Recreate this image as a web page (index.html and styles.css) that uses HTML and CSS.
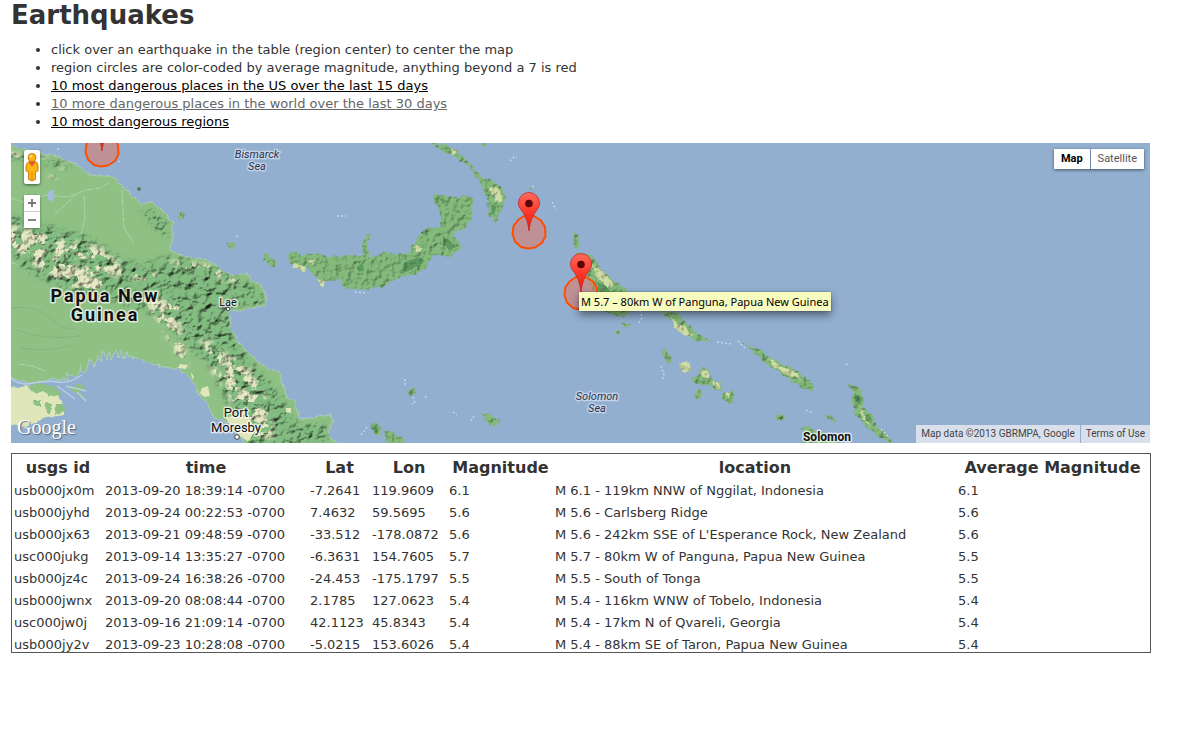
FILE: index.html
```html
<!DOCTYPE html>
<html lang="en">
<head>
<meta charset="utf-8">
<title>Earthquakes</title>
<link rel="stylesheet" href="styles.css">
</head>
<body>
<h1 class="title">Earthquakes</h1>
<ul class="notes">
  <li>click over an earthquake in the table (region center) to center the map</li>
  <li>region circles are color-coded by average magnitude, anything beyond a 7 is red</li>
  <li><a href="#us">10 most dangerous places in the US over the last 15 days</a></li>
  <li><a class="current" href="#world">10 more dangerous places in the world over the last 30 days</a></li>
  <li><a href="#regions">10 most dangerous regions</a></li>
</ul>

<section class="map" aria-label="Map">
  <svg class="terrain" viewBox="11 143 1139 300" preserveAspectRatio="xMinYMin slice">
    <defs>
      <filter id="relief" x="0" y="0" width="1" height="1" color-interpolation-filters="sRGB">
        <feTurbulence type="fractalNoise" baseFrequency="0.12 0.14" numOctaves="4" seed="7" result="n"/>
        <feColorMatrix in="n" type="matrix" values="0 0 0 0 0  0 0 0 0 0  0 0 0 0 0  1 0 0 0 0" result="h"/>
        <feDiffuseLighting in="h" surfaceScale="3" diffuseConstant="1.35" lighting-color="#fff" result="l"><feDistantLight azimuth="225" elevation="50"/></feDiffuseLighting>
        <feGaussianBlur in="SourceGraphic" stdDeviation="3" result="soft"/>
        <feComposite in="l" in2="soft" operator="arithmetic" k1="1" result="lit"/>
        <feComposite in="lit" in2="soft" operator="in"/>
      </filter>
      <filter id="small" x="0" y="0" width="1" height="1" color-interpolation-filters="sRGB">
        <feTurbulence type="fractalNoise" baseFrequency="0.16" numOctaves="3" seed="3" result="n"/>
        <feColorMatrix in="n" type="matrix" values="0 0 0 0 0  0 0 0 0 0  0 0 0 0 0  1 0 0 0 0" result="h"/>
        <feDiffuseLighting in="h" surfaceScale="1.300" diffuseConstant="1.250" lighting-color="#fff" result="l"><feDistantLight azimuth="225" elevation="52"/></feDiffuseLighting>
        <feDisplacementMap in="SourceGraphic" in2="n" scale="5" xChannelSelector="R" yChannelSelector="G" result="d"/>
        <feComposite in="l" in2="d" operator="arithmetic" k1="1" result="lit"/>
        <feComposite in="lit" in2="d" operator="in"/>
      </filter>
      <filter id="patches" x="0" y="0" width="1" height="1" color-interpolation-filters="sRGB">
        <feTurbulence type="fractalNoise" baseFrequency="0.09" numOctaves="4" seed="21" result="n"/>
        <feColorMatrix in="n" type="matrix" values="0 0 0 0 0  0 0 0 0 0  0 0 0 0 0  0 12 0 0 -5.500" result="m"/>
        <feGaussianBlur in="SourceGraphic" stdDeviation="3" result="soft"/>
        <feComposite in="soft" in2="m" operator="in" result="pale"/>
        <feTurbulence type="fractalNoise" baseFrequency="0.15" numOctaves="4" seed="7" result="n2"/>
        <feColorMatrix in="n2" type="matrix" values="0 0 0 0 0  0 0 0 0 0  0 0 0 0 0  1 0 0 0 0" result="h"/>
        <feDiffuseLighting in="h" surfaceScale="2.500" diffuseConstant="1.250" lighting-color="#fff" result="l"><feDistantLight azimuth="225" elevation="52"/></feDiffuseLighting>
        <feComposite in="l" in2="pale" operator="arithmetic" k1="1" result="lit"/>
        <feComposite in="lit" in2="pale" operator="in"/>
      </filter>
      <filter id="coast" x="-.1" y="-.1" width="1.2" height="1.2">
        <feTurbulence type="fractalNoise" baseFrequency="0.12" numOctaves="3" seed="5"/>
        <feDisplacementMap in="SourceGraphic" scale="6" xChannelSelector="R" yChannelSelector="G"/>
      </filter>
      <clipPath id="main"><path d="M11 145L20 147 40 154 60 157 75 164 90 175 103 176 115 177 117 183 130 192 140 203 153 203 167 215 173 223 173 240 171 252 177 255 200 259 213 263 230 275 247 274 260 285 266 295 266 307 253 307 240 311 228 310 230 327 238 343 253 357 267 368 279 372 283 387 287 397 295 402 298 418 310 418 330 415 333 420 328 433 340 443 250 443 240 436 232 425 213 417 208 405 197 390 192 378 180 370 157 365 137 358 120 352 110 357 97 358 87 363 86 370 77 377 53 380 33 383 18 380 11 376Z"/></clipPath>
      <linearGradient id="pinred" x1="0" y1="0" x2="0" y2="1"><stop offset="0" stop-color="#ff6b5e"/><stop offset=".5" stop-color="#fd3a2b"/><stop offset="1" stop-color="#e3170a"/></linearGradient>
      <g id="pin">
        <path d="M0 0C-1-9-3.500-15-7-20-9.500-23-10.500-25-10.500-28A10.500 10.500 0 1 1 10.500-28C10.500-25 9.500-23 7-20 3.500-15 1-9 0 0Z" fill="url(#pinred)" stroke="#c22b22" stroke-width=".8"/>
        <circle cy="-27.500" r="3.800" fill="#5c0505"/>
      </g>
      <path id="zone" d="M-5-16L5-16 12-11.500 16-5 16.500 4 13 11 6 15.500-1 16.500-8 15-14 9.500-16.500 2-15.500-6-11-12Z" fill="#e8745c" fill-opacity=".5" stroke="#ff4d00" stroke-width="2" stroke-linejoin="round"/>
    </defs>
    <rect x="11" y="143" width="1139" height="300" fill="#92afd0"/>

    <g filter="url(#coast)">
      <path fill="#8fc084" stroke="#b5d3b8" stroke-width=".8" d="M0 143L20 147 40 154 60 157 75 164 90 175 103 176 115 177 117 183 130 192 140 203 153 203 167 215 173 223 173 240 171 252 177 255 200 259 213 263 230 275 247 274 260 285 266 295 266 307 253 307 240 311 228 310 230 327 238 343 253 357 267 368 279 372 283 387 287 397 295 402 298 418 310 418 330 415 333 420 328 433 340 450 250 450 240 436 232 425 213 417 208 405 197 390 192 378 180 370 157 365 137 358 128 357 127 351 124 359 121 350 118 358 115 349 112 360 109 352 107 361 103 351 101 363 97 355 94 366 90 359 86 370 82 373 80 365 78 378 66 373 70 380 53 380 33 383 18 380 0 374Z"/>
      <path fill="#dfe6ba" d="M0 385L20 387 33 385 55 389 60 397 65 405 63 415 47 418 27 426 0 423Z"/>
      <path fill="#8fc084" d="M28 386L42 383 56 386 60 394 50 396 43 391 35 394ZM33 400h8v6h-7ZM46 404h5v9h-4ZM56 404h9v8l-10 2ZM68 386l9-2 8 4-4 4 4 7-12-8Z"/>
    </g>
    <path d="M11 378Q19 386 33 383T58 382 82 375M57 386l18 13M66 386l20 5M77 392l9 9" fill="none" stroke="#b9cfe5" stroke-width="1.400"/>

    <g clip-path="url(#main)">
      <g filter="url(#relief)" fill="#82bc80">
        <path d="M5 212L40 222 70 228 98 240 120 256 145 262 172 254 205 262 262 286 266 306 232 308 236 340 262 372 288 402 300 424 326 420 332 450 246 450 232 420 222 395 206 365 190 350 174 335 158 318 120 304 88 298 48 284 20 268 5 240Z"/>
        <path d="M5 150L30 154 62 160 76 168 60 170 30 163 5 160Z"/>
        <path d="M138 210L152 206 168 222 170 240 156 232Z"/>
      </g>
      <g filter="url(#patches)" fill="#e5e8c3">
        <path d="M5 222L35 228 60 236 88 242 104 246 112 256 125 262 150 268 164 278 155 284 130 280 112 276 106 296 90 296 66 288 48 276 30 266 5 244Z"/>
        <path d="M165 258L205 262 242 276 236 286 210 276 170 266Z"/>
        <path d="M128 292L160 296 186 304 182 322 186 346 190 368 178 368 170 345 160 330 150 312Z"/>
        <path d="M196 336L212 340 226 352 246 362 262 384 272 408 276 440 236 440 232 412 226 392 210 374 204 356Z"/>
        <path d="M45 178L60 168 66 160 70 162 58 180 48 184Z"/>
        <path d="M5 148L30 155 60 158 30 164 5 158Z"/>
      </g>
      <g fill="#dfe6ba">
        <path d="M180 364l8 1 -2 4 -8 -1ZM191 372l3 5 -2 3ZM202 388l6-2 2 10 -6 1 -4-4ZM226 418l12-4 12 6 6 10 -8 12 -10 0ZM286 408l5 0 0 5 -5-1Z"/>
      </g>
      <path d="M11 198L30 204 44 195 68 197 86 190 100 188 110 182M122 190l2 38 10 15M84 196l1 22 -4 16M55 214l22-20M11 262l7 3M20 364l12 2 14 5" fill="none" stroke="#b4d6ae" stroke-width="1" stroke-dasharray="5 1 2 1"/>
      <path d="M11 308Q36 304 50 318T76 328M16 330Q45 341 80 336M20 348Q46 352 70 346" fill="none" stroke="#84b47d" stroke-width="1"/>
      <path d="M48 192l5-3 2 8-4 5-3-3Z" fill="#a3bedb"/>
    </g>

    <g filter="url(#small)">
      <rect x="11" y="143" width="1139" height="300" fill="none"/>
      <g fill="#84ba7b">
        <path d="M288 255L293 252 303 255 317 253 330 257 347 255 363 255 362 245 367 232 371 235 367 247 370 257 387 252 395 255 410 252 417 237 427 228 440 228 441 217 433 195 447 195 460 198 466 194 473 200 472 220 463 229 453 232 457 240 462 248 450 257 433 255 427 268 413 275 400 277 383 287 367 289 345 289 340 280 320 282 307 268 290 263Z"/>
        <path d="M430 142L447 145 460 153 473 167 482 178 493 180 502 188 506 200 502 208 497 222 488 215 487 200 480 182 470 168 457 158 440 150Z"/>
        <path d="M574 231L577 232 580 245 576 250 573 243ZM575 252L592 255 600 268 613 280 627 290 632 310 625 317 607 314 598 300 588 280Z"/>
        <path d="M658 309L675 313 687 322 695 332 712 341 698 341 682 332 672 322Z"/>
        <path d="M738 340L748 346 763 350 770 358 790 367 803 375 814 385 813 393 800 387 783 375 767 365 757 355Z"/>
        <path d="M847 383L858 387 865 398 863 408 873 415 877 427 888 435 893 445 883 441 868 428 857 417 851 403 853 393Z"/>
        <path d="M177 214l4-4 4 4-1 5-5 0ZM227 243l5-2 5 4-3 5-6-1ZM263 253l6 2 8 6-1 6-5 0-7-7ZM289 254l5-2 7 4-1 9-6 1-5-5Z"/>
        <path d="M480 413l10 2 10 5-2 5-9 0-5-7ZM371 425l7-2 3 6-1 7-7-3ZM385 430l8 2 6 4 5 3 1 8-18 0ZM408 392l7-5 1 7-6 2Z"/>
        <path d="M661 350l6-1 2 6 4 2-4 7-4-5ZM697 391l4-3 1 8-5 3-3-4ZM690 378l8-2 4-8 8 1 2 10 9 4 2 9-8-1-7-7-7 1-8-3ZM723 393l10-3 1 11-5 3-6-5ZM775 416l6-2 4 3-1 4-7-1ZM823 413l8 4 7 3-3 2-7-3ZM622 322l9 1-1 4-6 1ZM615 331l5 0 0 3-5 0ZM801 428l5-2 20 8 18 12-40 0Z"/>
        <path d="M480 143h6l-1 5ZM527 190l5-4-1 5Z"/>
      </g>
      <g fill="#d0dda5">
        <circle cx="686" cy="367" r="6"/>
        <path d="M488 187L499 188 503 200 496 203ZM293 263l13 4 0 5-15-5ZM317 279l7 0 0 7-4 0ZM451 148l6 5-6 2ZM308 260l7-2-2 7ZM592 264l12 9 10 12-6 2-11-10ZM671 318l11 8 12 9-7 2-13-10ZM768 358l14 8 12 6 8 7-15-4-14-9ZM700 371l8-1 2 8-7 0ZM713 380l7 3 2 7-7-1ZM724 393l6-1-1 6ZM858 400l3 9 7 12 2 6-8-11ZM415 246l6 0 0 6-5 0Z"/>
      </g>
      <g fill="#5d9a61">
        <path d="M405 262l12-5 8 4-14 9-10 2ZM356 268l5-5 4 7-6 3ZM443 236l6 4 6 7-5 4-7-6ZM421 234l6-3 0 6ZM438 199l6-1 3 5-5 2ZM490 203l6 4-1 10-4-4ZM179 213l3-1 1 4-3 1ZM373 427l4-1 1 5-3 1ZM596 283l10 3 10 9-6 2-11-7ZM855 393l6 4-1 7-5-3ZM866 414l6 5 1 5-6-4ZM760 352l6 3-2 3Z"/>
      </g>
    </g>
    <g fill="none" stroke="#c6dced" stroke-width="1.300" stroke-dasharray="2 2">
      <path d="M510 161l4-4 3 0M532 187l3-2M552 202l4 8M337 216l9 0M413 397l2 6-3 1M425 396l2 2M453 412l4 3M361 435l4-5 3-5M471 421l3-5M355 292l12 1M405 379l0 6M640 310l2 8-4 6M661 366l3 9-2 6M717 342l15 2M738 341l8 8M806 410l6 3M881 429l8 8M236 236l3 1M57 149l3 0M119 161l1 1M846 364l3 1"/>
    </g>
    <circle cx="139" cy="189" r="2" fill="#587f62"/>

    <g class="place" text-anchor="middle">
      <g class="sea"><text x="257" y="158">Bismarck</text><text x="257" y="170">Sea</text><text x="597" y="400">Solomon</text><text x="597" y="412">Sea</text></g>
      <g class="country"><text x="105" y="302">Papua New</text><text x="105" y="321">Guinea</text></g>
      <text class="town" x="228" y="306">Lae</text>
      <g class="city"><text x="236" y="417">Port</text><text x="236" y="432">Moresby</text></g>
      <text class="islands" x="827" y="441">Solomon</text>
    </g>
    <g fill="#fff" stroke="#444"><circle cx="228" cy="309" r="1.800"/><circle cx="237" cy="437" r="2.300"/></g>

    <use href="#zone" x="102" y="150"/><use href="#zone" x="529" y="232"/><use href="#zone" x="581" y="293"/>
    <use href="#pin" x="102" y="151"/><use href="#pin" x="529" y="231"/><use href="#pin" x="581" y="292"/>
  </svg>

  <div class="navigation">
    <button class="pegman" aria-label="Street View">
      <svg viewBox="0 0 16 34" width="16" height="34">
        <g fill="#fbb416" stroke="#c87a09" stroke-width=".9"><path d="M4.500 12Q2 13 2 16V21L4.500 22V29.500Q8 32 11.500 29.500V22L14 21V16Q14 12 11 11.500H5.500Z"/><circle cx="8" cy="7.500" r="4"/></g>
        <path d="M4.500 12H11.500L8 16.500Z" fill="#f0502a"/><path d="M8 22V30" stroke="#d98a0b"/><circle cx="7" cy="6.300" r="1.300" fill="#fee48b"/>
      </svg>
    </button>
    <div class="zoom">
      <button aria-label="Zoom in"><svg viewBox="0 0 8 8" width="8" height="8"><path d="M0 4H8M4 0V8" stroke="#777" stroke-width="1.800"/></svg></button>
      <button aria-label="Zoom out"><svg viewBox="0 0 8 8" width="8" height="8"><path d="M0 4H8" stroke="#777" stroke-width="1.800"/></svg></button>
    </div>
  </div>
  <div class="types"><button class="active">Map</button><button>Satellite</button></div>
  <div class="google">Google</div>
  <div class="credits"><span>Map data ©2013 GBRMPA, Google</span><a href="#terms">Terms of Use</a></div>
  <div class="tooltip" role="tooltip">M 5.7 – 80km W of Panguna, Papua New Guinea</div>
</section>

<div class="quakes">
<table>
  <colgroup><col class="c-id"><col class="c-time"><col class="c-lat"><col class="c-lon"><col class="c-mag"><col><col class="c-avg"></colgroup>
  <thead><tr><th>usgs id</th><th>time</th><th>Lat</th><th>Lon</th><th>Magnitude</th><th>location</th><th>Average Magnitude</th></tr></thead>
  <tbody>
  <tr><td>usb000jx0m</td><td>2013-09-20 18:39:14 -0700</td><td>-7.2641</td><td>119.9609</td><td>6.1</td><td>M 6.1 - 119km NNW of Nggilat, Indonesia</td><td>6.1</td></tr>
  <tr><td>usb000jyhd</td><td>2013-09-24 00:22:53 -0700</td><td>7.4632</td><td>59.5695</td><td>5.6</td><td>M 5.6 - Carlsberg Ridge</td><td>5.6</td></tr>
  <tr><td>usb000jx63</td><td>2013-09-21 09:48:59 -0700</td><td>-33.512</td><td>-178.0872</td><td>5.6</td><td>M 5.6 - 242km SSE of L'Esperance Rock, New Zealand</td><td>5.6</td></tr>
  <tr><td>usc000jukg</td><td>2013-09-14 13:35:27 -0700</td><td>-6.3631</td><td>154.7605</td><td>5.7</td><td>M 5.7 - 80km W of Panguna, Papua New Guinea</td><td>5.5</td></tr>
  <tr><td>usb000jz4c</td><td>2013-09-24 16:38:26 -0700</td><td>-24.453</td><td>-175.1797</td><td>5.5</td><td>M 5.5 - South of Tonga</td><td>5.5</td></tr>
  <tr><td>usb000jwnx</td><td>2013-09-20 08:08:44 -0700</td><td>2.1785</td><td>127.0623</td><td>5.4</td><td>M 5.4 - 116km WNW of Tobelo, Indonesia</td><td>5.4</td></tr>
  <tr><td>usc000jw0j</td><td>2013-09-16 21:09:14 -0700</td><td>42.1123</td><td>45.8343</td><td>5.4</td><td>M 5.4 - 17km N of Qvareli, Georgia</td><td>5.4</td></tr>
  <tr><td>usb000jy2v</td><td>2013-09-23 10:28:08 -0700</td><td>-5.0215</td><td>153.6026</td><td>5.4</td><td>M 5.4 - 88km SE of Taron, Papua New Guinea</td><td>5.4</td></tr>
  </tbody>
</table>
</div>
</body>
</html>
```
FILE: styles.css
```css
body {
  margin: 0 32px 0 11px;
  background: #fff;
  color: #333;
  font: 13px/18px Verdana, "DejaVu Sans", sans-serif;
}
.title { margin: 0; font-size: 26px; line-height: 30px; }
.notes { margin: 11px 0 12px; padding-left: 40px; }
a { color: #000; }
a.current { color: #666; }

.map {
  position: relative;
  height: 300px;
  margin-right: 1px;
  overflow: hidden;
  background: #92afd0;
  font-family: Roboto, sans-serif;
}
.terrain { display: block; width: 100%; height: 100%; }
.place { fill: #111; stroke: #ffffffb0; stroke-width: 3px; stroke-linejoin: round; paint-order: stroke; }
.sea { font-size: 11px; font-style: italic; fill: #2c3550; stroke: #d5e0f0b0; }
.country { font-size: 18px; font-weight: 700; letter-spacing: 2px; }
.town { font-size: 11px; }
.city { font-size: 13px; }
.islands { font-size: 12px; font-weight: 700; }

.map button { border: 0; padding: 0; background: #fff; font: inherit; cursor: pointer; }
.map button svg { display: block; margin: auto; }
.navigation { position: absolute; left: 13px; top: 7px; display: grid; gap: 11px; width: 16px; }
.map .pegman { width: 16px; height: 34px; border-radius: 2px; box-shadow: 0 1px 3px #0008; }
.zoom { display: grid; border-radius: 2px; background: #ccc; gap: 1px; box-shadow: 0 1px 3px #0006; }
.zoom button { height: 16px; }
.types { position: absolute; right: 6px; top: 6px; display: flex; gap: 1px; background: #6e89a8; box-shadow: 0 1px 3px #0008; }
.map .types button { height: 20px; padding: 0 7px; font-size: 11px; line-height: 20px; color: #555; }
.map .types .active { font-weight: 700; color: #000; }
.google { position: absolute; left: 6px; bottom: 4px; color: #fff; font: 20px/24px "Liberation Serif", serif; text-shadow: 1px 1px 1px #567; }
.credits { position: absolute; right: 0; bottom: 0; display: flex; gap: 1px; font-size: 10px; line-height: 18px; color: #444; }
.credits > * { padding: 0 5px; background: #d9e0ec; color: #444; text-decoration: none; }
.tooltip {
  position: absolute;
  left: 568px;
  top: 149px;
  padding: 0 2px;
  background: #f8fbc0;
  color: #000;
  font: 11px/19px "Lucida Grande", "Noto Sans", sans-serif;
  white-space: nowrap;
  box-shadow: 0 0 1px #0008, 0 4px 8px #0007;
}

.quakes { box-sizing: border-box; max-height: 200px; margin-top: 10px; overflow: hidden; border: 1px solid #555; }
table { width: 100%; table-layout: fixed; border-collapse: separate; border-spacing: 2px; }
th, td { padding: 1px 1px 1px 0; text-align: left; white-space: nowrap; line-height: 18px; }
th { text-align: center; font-size: 16px; line-height: 21px; }
.c-id { width: 89px; }
.c-time { width: 203px; }
.c-lat { width: 60px; }
.c-lon { width: 75px; }
.c-mag { width: 104px; }
.c-avg { width: 190px; }
```
